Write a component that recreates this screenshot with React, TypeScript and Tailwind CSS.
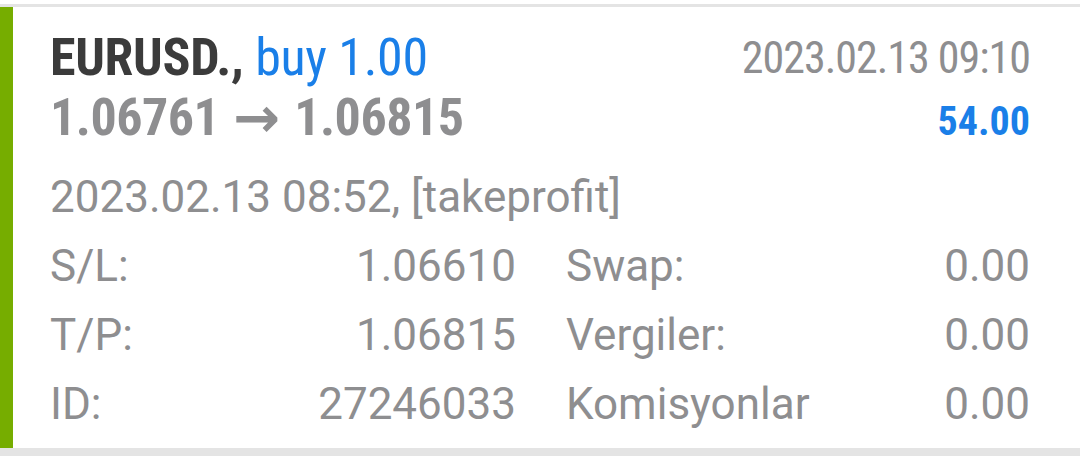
import React from 'react';

const rows = [
  { label: 'S/L:', value: '1.06610', label2: 'Swap:', value2: '0.00' },
  { label: 'T/P:', value: '1.06815', label2: 'Vergiler:', value2: '0.00' },
  { label: 'ID:', value: '27246033', label2: 'Komisyonlar', value2: '0.00' },
];

export default function App() {
  return (
    <div className="w-[1080px] h-[456px] bg-white overflow-hidden flex flex-col font-['Roboto',sans-serif]">
      <div className="h-[4px] bg-white" />
      <div className="h-[3px] bg-[#e4e4e4]" />
      <div className="flex flex-1">
        {/* Status stripe */}
        <div className="w-[13px] bg-[#76ad00]" />
        <div className="flex-1 pl-[37px] pr-[50px] pt-[21px]">
          {/* Header */}
          <div className="flex justify-between font-['Roboto_Condensed',Roboto,sans-serif]">
            <div className="flex flex-col">
              <div className="text-[52px] leading-[60px] font-bold tracking-[-0.3px] text-[#3b3b3b]">
                EURUSD., <span className="font-normal text-[#1a7fe8]">buy 1.00</span>
              </div>
              <div className="flex items-center text-[52px] leading-[60px] font-bold tracking-[-0.5px] text-[#8e8e90]">
                <span>1.06761</span>
                <span className="mx-[14px] font-bold text-[56px] leading-none font-['DejaVu_Sans',sans-serif] tracking-normal">→</span>
                <span>1.06815</span>
              </div>
            </div>
            <div className="flex flex-col items-end">
              <div className="text-[44px] leading-[60px] tracking-[-1px] text-[#8e8e90]">
                2023.02.13 09:10
              </div>
              <div className="text-[40px] leading-[60px] font-bold text-[#1a7fe8] mt-[4px]">
                54.00
              </div>
            </div>
          </div>

          {/* Details */}
          <div className="mt-[11px] text-[44px] leading-[69px] text-[#8e8e90]">
            <div>2023.02.13 08:52, [takeprofit]</div>
            {rows.map((r) => (
              <div key={r.label} className="flex">
                <div className="w-[466px] flex justify-between">
                  <span>{r.label}</span>
                  <span>{r.value}</span>
                </div>
                <div className="flex-1 flex justify-between pl-[50px]">
                  <span>{r.label2}</span>
                  <span>{r.value2}</span>
                </div>
              </div>
            ))}
          </div>
        </div>
      </div>
      <div className="h-[8px] bg-[#e4e4e4]" />
    </div>
  );
}
